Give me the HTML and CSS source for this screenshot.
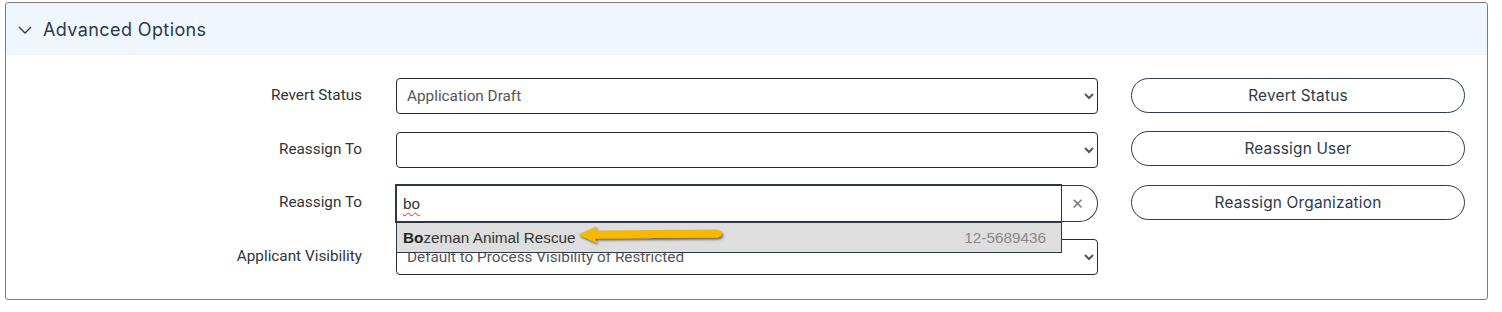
FILE: index.html
```html
<!DOCTYPE html>
<html lang="en">
<head>
<meta charset="utf-8">
<title>Advanced Options</title>
<link rel="stylesheet" href="styles.css">
</head>
<body>
<section class="card">
  <header class="card-header">
    <svg class="chev" width="14" height="8" viewBox="0 0 14 8"><path d="M1 1 L7 7 L13 1" fill="none" stroke="#2d3a4a" stroke-width="1.3"/></svg>
    <h2 class="title">Advanced Options</h2>
  </header>
  <div class="card-body">
    <label class="lbl">Revert Status</label>
    <select class="sel"><option>Application Draft</option></select>
    <button class="btn">Revert Status</button>

    <label class="lbl">Reassign To</label>
    <select class="sel"><option></option></select>
    <button class="btn">Reassign User</button>

    <label class="lbl">Reassign To</label>
    <div class="combo">
      <div class="search"><span class="typed">bo</span></div>
      <span class="clear">&#x2715;</span>
      <div class="menu">
        <div class="menu-item">
          <span class="name"><b>Bo</b>zeman Animal Rescue</span>
          <span class="ein">12-5689436</span>
        </div>
        <svg class="arrow" width="150" height="24" viewBox="0 0 150 24">
          <defs>
            <filter id="sh" x="-10%" y="-30%" width="120%" height="180%">
              <feDropShadow dx="1.5" dy="2" stdDeviation="1.2" flood-color="#000" flood-opacity="0.55"/>
            </filter>
          </defs>
          <path d="M1 10.5 L20 2 L17.5 6.5 L139 5.5 Q144.5 5.5 144.5 9.5 Q144.5 13.5 139 13.5 L17.5 14.5 L20 19 Z" fill="#f9b800" filter="url(#sh)"/>
        </svg>
      </div>
    </div>
    <button class="btn">Reassign Organization</button>

    <label class="lbl">Applicant Visibility</label>
    <select class="sel"><option>Default to Process Visibility of Restricted</option></select>
    <span></span>
  </div>
</section>
</body>
</html>
```
FILE: styles.css
```css
html, body {
  margin: 0;
  padding: 0;
  background: #fff;
}
body {
  padding: 2px 14px 0 5px;
  font-family: Roboto, "Liberation Sans", Arial, sans-serif;
}
.card {
  border: 1px solid #7b7b7b;
  border-radius: 3px;
  background: #fff;
  height: 296px;
  box-sizing: content-box;
  width: 1481px;
}
.card-header {
  background: #eff6fe;
  height: 52px;
  display: flex;
  align-items: center;
  padding-left: 12px;
  gap: 11px;
  border-radius: 3px 3px 0 0;
}
.chev {
  display: block;
  margin-top: 1px;
}
.title {
  margin: 0;
  font-family: Inter, "Open Sans", sans-serif;
  font-weight: 400;
  font-size: 18px;
  letter-spacing: 0.4px;
  color: #2d3a4a;
}
.card-body {
  display: grid;
  grid-template-columns: 356px 702px 334px;
  column-gap: 34px;
  row-gap: 17.7px;
  grid-auto-rows: 36px;
  padding-top: 23px;
  align-items: center;
}
.lbl {
  text-align: right;
  font-size: 15.3px;
  color: #333;
  margin-top: -2px;
}
.sel {
  height: 36px;
  width: 702px;
  border: 1px solid #2b2b2b;
  border-radius: 4px;
  background: #fff;
  font-family: Roboto, "Liberation Sans", sans-serif;
  font-size: 15.3px;
  color: #555;
  padding: 0 6px;
  margin: 0;
}
.btn {
  height: 35px;
  width: 334px;
  border: 1px solid #2d3a4a;
  border-radius: 18px;
  background: #fff;
  font-family: Inter, "Open Sans", sans-serif;
  font-size: 15.4px;
  color: #2d3a4a;
  margin: -2px 0 0 -1px;
  padding: 0;
  letter-spacing: 0.2px;
}
.combo {
  position: relative;
  display: flex;
  height: 36px;
}
.search {
  box-sizing: border-box;
  width: 667px;
  height: 39px;
  margin-top: -1px;
  margin-left: -1px;
  border: 2px solid #2d3748;
  border-right-width: 1px;
  padding: 0 6px;
  display: flex;
  align-items: center;
  font-family: "Liberation Sans", Arial, sans-serif;
  font-size: 15.3px;
  color: #333;
  background: #fff;
}
.typed {
  text-decoration: underline wavy #e0241b;
  text-decoration-thickness: 1.2px;
  text-underline-offset: 3px;
}
.clear {
  box-sizing: border-box;
  width: 36px;
  height: 37px;
  margin-top: 0;
  border: 1px solid #2d3748;
  border-left: none;
  border-radius: 0 19px 19px 0;
  display: flex;
  align-items: center;
  justify-content: center;
  color: #777;
  font-size: 15px;
  font-family: "DejaVu Sans", sans-serif;
  padding-right: 4px;
}
.menu {
  position: absolute;
  left: 0;
  top: 38px;
  width: 666px;
  z-index: 5;
}
.menu-item {
  box-sizing: border-box;
  height: 30px;
  background: #dedede;
  border: 1px solid #2d3748;
  border-top: none;
  display: flex;
  align-items: center;
  justify-content: space-between;
  padding: 0 15px 0 6px;
  font-family: "Liberation Sans", Arial, sans-serif;
  font-size: 15.3px;
}
.name {
  color: #333;
}
.name b {
  color: #222;
}
.ein {
  color: #888;
}
.arrow {
  position: absolute;
  left: 181px;
  top: 1px;
}
```
